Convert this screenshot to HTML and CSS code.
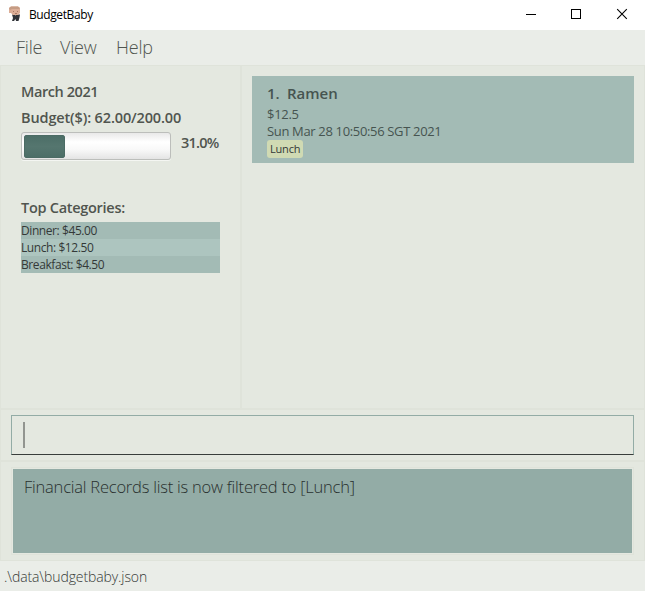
FILE: index.html
```html
<!DOCTYPE html>
<html lang="en">
<head>
<meta charset="utf-8">
<title>BudgetBaby</title>
<link rel="stylesheet" href="styles.css">
</head>
<body>
<div class="window">
  <header class="titlebar">
    <svg class="app-icon" width="16" height="16" viewBox="0 0 16 16">
      <path d="M5 8.500h8l-.5 3-1 3.500H9l-.5-2-1.500 2H5l1-3z" fill="#303338"/>
      <path d="M2 2l2-1.500h7L13 2v5l-2 2H6L4 7H2z" fill="#dcae97"/>
      <path d="M2 2l2-1.500h7L13 2l-1 1H5L3 4z" fill="#c59c84"/>
      <path d="M6 5h1v1H6zm4 0h1v1h-1zM8 7h2v1H8z" fill="#a87966"/>
      <path d="M8 9h1l-.5 1z" fill="#aaa"/>
    </svg>
    <span class="app-name">BudgetBaby</span>
    <div class="controls">
      <svg width="46" height="30"><path d="M16 14.500h10" stroke="#000"/></svg>
      <svg width="46" height="30"><rect x="15.500" y="9.500" width="9" height="9" fill="none" stroke="#000"/></svg>
      <svg width="43" height="30"><path d="M15.200 9.200l9.600 9.600m0-9.600l-9.600 9.600" stroke="#000" stroke-width="1.100"/></svg>
    </div>
  </header>
  <nav class="menu"><span class="m-file">File</span><span class="m-view">View</span><span class="m-help">Help</span></nav>
  <main class="content">
    <section class="overview">
      <h2 class="heading month">March 2021</h2>
      <h2 class="heading budget">Budget($): 62.00/200.00</h2>
      <div class="progress-row">
        <div class="track"><div class="bar"></div></div>
        <span class="heading percent">31.0%</span>
      </div>
      <h2 class="heading top">Top Categories:</h2>
      <ul class="categories">
        <li>Dinner: $45.00</li>
        <li>Lunch: $12.50</li>
        <li>Breakfast: $4.50</li>
      </ul>
    </section>
    <section class="records">
      <article class="record">
        <h3 class="record-name"><span class="index">1.</span><span>Ramen</span></h3>
        <p class="amount">$12.5</p>
        <p class="date">Sun Mar 28 10:50:56 SGT 2021</p>
        <span class="tag">Lunch</span>
      </article>
    </section>
  </main>
  <section class="command"><div class="input"><span class="caret"></span></div></section>
  <section class="result"><div class="result-box"><span class="message">Financial Records list is now filtered to [Lunch]</span></div></section>
  <footer class="status"><span class="path">.\data\budgetbaby.json</span></footer>
</div>
</body>
</html>
```
FILE: styles.css
```css
* { box-sizing: border-box; margin: 0; padding: 0; }
body {
  width: 645px; height: 591px; overflow: hidden;
  font-family: "Open Sans", "Noto Sans", sans-serif;
  color: #50554f;
}
.window {
  display: grid; height: 591px; background: #e4e8e0;
  grid-template-rows: 30px 35px 345px 52px 99px 30px;
}
.titlebar { display: flex; background: #fff; color: #000; }
.app-icon { margin: 6px 0 0 7px; }
.app-name { margin-left: 6px; font-size: 12px; line-height: 30px; letter-spacing: -0.4px; }
.controls { display: flex; margin-left: auto; }
.menu { display: flex; background: #eaede8; padding-left: 16px; font-size: 18px; font-weight: 300; line-height: 35px; letter-spacing: -0.2px; }
.menu span { flex: none; white-space: nowrap; }
.m-file { width: 44px; }
.m-view { width: 56px; }
.content { display: grid; grid-template-columns: 241px 1fr; border: solid #dfe3da; border-width: 1px 1px 2px; }
.overview { padding: 16px 18px 0 20px; border-right: 2px solid #dfe3da; }
.heading { font-size: 14.500px; font-weight: 600; line-height: 20px; white-space: nowrap; letter-spacing: -0.42px; }
.budget { margin-top: 6px; letter-spacing: -0.14px; }
.progress-row { display: flex; margin-top: 4px; height: 29px; }
.track {
  width: 150px; height: 28px; padding: 2px; border: 1px solid #bcbebb; border-radius: 3px;
  background: linear-gradient(#e9e9e9, #fff 35%, #f8f8f8 65%, #e4e4e4);
  box-shadow: 0 1px #f4f6f2;
}
.bar { width: 41px; height: 23px; border-radius: 2px; border: 1px solid #4b6b64; background: linear-gradient(#4c6e67, #55766f 50%, #4c6e67); }
.percent { margin: 1px 0 0 10px; letter-spacing: -0.75px; }
.top { margin-top: 37px; letter-spacing: -0.28px; }
.categories { list-style: none; width: 199px; margin-top: 4px; font-size: 12px; color: #343938; }
.categories li { height: 17px; line-height: 17px; background: #a3bbb5; white-space: nowrap; letter-spacing: -0.42px; }
.categories li:nth-child(2) { background: #adc5bf; }
.records { padding: 10px 10px 0; }
.record { height: 87px; background: #a3bbb5; padding: 7px 15px; color: #465450; }
.record-name { display: flex; font-size: 15px; font-weight: 600; line-height: 20px; }
.index { width: 20px; }
.amount, .date { font-size: 13px; line-height: 17px; white-space: nowrap; letter-spacing: -0.34px; }
.amount { margin-top: 3px; letter-spacing: -0.3px; }
.tag { display: block; width: 36px; height: 18px; padding-left: 3px; border-radius: 3px; background: #d0dab3; color: #343938; font-size: 11px; line-height: 18px; letter-spacing: -0.2px; }
.command { padding: 5px 10px 0; border: solid #dfe3da; border-width: 0 1px 2px; }
.input { height: 40px; border: 1px solid #93aca6; border-bottom-color: #383d3b; padding: 6px 11px; }
.caret { display: block; width: 2px; height: 26px; background: #929590; }
.result { padding: 5px 10px; border: 1px solid #dfe3da; border-top: 0; }
.result-box { height: 88px; border: 1px solid #dfe3da; padding: 1px; }
.message { display: block; height: 84px; background: #93aca6; padding: 7px 11px; font-size: 16.500px; font-weight: 300; line-height: 22px; letter-spacing: -0.22px; color: #29302e; white-space: nowrap; }
.status { background: #eaede8; padding-left: 4px; font-size: 14px; font-weight: 300; line-height: 31px; letter-spacing: -0.1px; color: #353936; }
```
